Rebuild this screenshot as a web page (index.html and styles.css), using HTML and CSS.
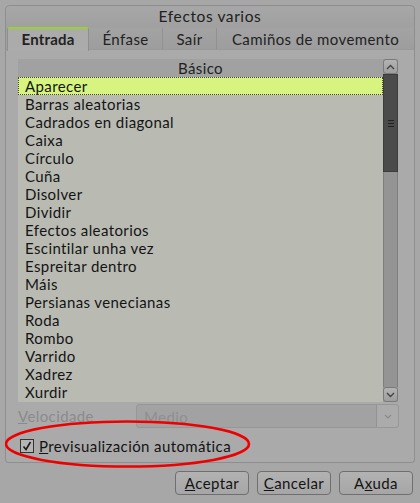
FILE: index.html
```html
<!DOCTYPE html>
<html>
<head>
<meta charset="utf-8">
<link rel="stylesheet" href="styles.css">
</head>
<body>
<div class="dialog">
  <div class="title">Efectos varios</div>
  <div class="tabs">
    <div class="tab tab-active">Entrada</div>
    <div class="tab tab-2">Énfase</div>
    <div class="tab tab-3">Saír</div>
    <div class="tab tab-4">Camiños de movemento</div>
  </div>
  <div class="panel">
    <div class="listbox">
      <div class="list">
        <div class="list-header">Básico</div>
        <div class="row row-selected">Aparecer</div>
        <div class="row">Barras aleatorias</div>
        <div class="row">Cadrados en diagonal</div>
        <div class="row">Caixa</div>
        <div class="row">Círculo</div>
        <div class="row">Cuña</div>
        <div class="row">Disolver</div>
        <div class="row">Dividir</div>
        <div class="row">Efectos aleatorios</div>
        <div class="row">Escintilar unha vez</div>
        <div class="row">Espreitar dentro</div>
        <div class="row">Máis</div>
        <div class="row">Persianas venecianas</div>
        <div class="row">Roda</div>
        <div class="row">Rombo</div>
        <div class="row">Varrido</div>
        <div class="row">Xadrez</div>
        <div class="row">Xurdir</div>
      </div>
      <div class="scrollbar">
        <div class="sb-btn"><svg width="9" height="6" viewBox="0 0 9 6"><path d="M1 5 L4.5 1.5 L8 5" fill="none" stroke="#444" stroke-width="1.4"/></svg></div>
        <div class="sb-thumb"><span class="grip"></span><span class="grip"></span><span class="grip"></span></div>
        <div class="sb-track"></div>
        <div class="sb-btn"><svg width="9" height="6" viewBox="0 0 9 6"><path d="M1 1 L4.5 4.5 L8 1" fill="none" stroke="#444" stroke-width="1.4"/></svg></div>
      </div>
    </div>
    <div class="speed">
      <span class="speed-label"><u>V</u>elocidade</span>
      <div class="combo">
        <span class="combo-text">Medio</span>
        <span class="combo-btn"><svg width="8" height="5" viewBox="0 0 8 5"><path d="M1 1 L4 4 L7 1" fill="none" stroke="#8a8a8a" stroke-width="1.2"/></svg></span>
      </div>
    </div>
    <div class="check-row">
      <span class="checkbox"><svg width="12" height="12" viewBox="0 0 12 12"><path d="M2.5 6.5 L5 9.5 L9.5 2" fill="none" stroke="#1a1a1a" stroke-width="1.6"/></svg></span>
      <span class="check-label"><u>P</u>revisualización automática</span>
      <svg class="ellipse" width="246" height="50" viewBox="0 0 246 50"><ellipse cx="122.5" cy="25" rx="121.5" ry="22.5" fill="none" stroke="#ee0000" stroke-width="2.6"/></svg>
    </div>
  </div>
  <div class="buttons">
    <div class="btn"><u>A</u>ceptar</div>
    <div class="btn"><u>C</u>ancelar</div>
    <div class="btn">A<u>x</u>uda</div>
  </div>
</div>
</body>
</html>
```
FILE: styles.css
```css
html, body {
  margin: 0;
  padding: 0;
}
body {
  width: 420px;
  height: 503px;
  background: #a7a7a7;
  font-family: Lato, "Open Sans", "DejaVu Sans", sans-serif;
  font-size: 15px;
  letter-spacing: 0.4px;
  color: #1e1e1e;
  overflow: hidden;
}
.dialog {
  padding: 5px 5px 0 5px;
  display: flex;
  flex-direction: column;
}
.title {
  height: 21px;
  border: 1px solid #8e8e8e;
  border-bottom: none;
  border-radius: 5px 5px 0 0;
  background: linear-gradient(#a7a7a7, #a0a0a0);
  text-align: center;
  line-height: 21px;
  font-size: 15.5px;
  letter-spacing: 0.6px;
  color: #202020;
}
.tabs {
  display: flex;
  height: 23px;
  border-left: 1px solid #8e8e8e;
  border-right: 1px solid #8e8e8e;
  background: #a1a1a1;
  padding-left: 1px;
}
.tab {
  height: 22px;
  line-height: 23px;
  text-align: center;
  border-right: 1px solid #919191;
  background: linear-gradient(#a3a3a3, #9d9d9d);
  color: #222;
  box-sizing: border-box;
  margin-top: 1px;
  white-space: nowrap;
}
.tab-active {
  width: 82px;
  font-weight: bold;
  letter-spacing: 0.2px;
  background: #ababab;
  border: 1px solid #8e8e8e;
  border-top: 2px solid #9ad234;
  border-bottom: none;
  border-radius: 3px 3px 0 0;
  margin-top: 0;
  height: 24px;
  line-height: 21px;
  position: relative;
  z-index: 1;
}
.tab-2 { width: 74px; }
.tab-3 { width: 54px; }
.tab-4 { flex: 1; border-right: none; }
.panel {
  margin-top: -1px;
  height: 414px;
  border: 1px solid #8e8e8e;
  border-top-color: #999;
  border-radius: 0 0 4px 4px;
  background: #aaaaaa;
  box-sizing: border-box;
  padding: 9px 16px 0 12px;
  display: flex;
  flex-direction: column;
}
.listbox {
  display: flex;
  height: 343px;
}
.list {
  flex: 1;
  background: #b9bbb3;
  overflow: hidden;
}
.list-header {
  height: 18px;
  line-height: 18px;
  text-align: center;
  background: #a1a1a1;
  color: #222;
}
.row {
  height: 18px;
  line-height: 18px;
  padding-left: 7px;
  color: #141414;
  white-space: nowrap;
}
.row-selected {
  background: #d6f47f;
  outline: 1px dotted #444;
  outline-offset: -1px;
}
.scrollbar {
  width: 15px;
  display: flex;
  flex-direction: column;
  background: #9a9a9a;
}
.sb-btn {
  height: 15px;
  border: 1px solid #7a7a7a;
  border-radius: 3px;
  background: linear-gradient(#b3b3b3, #9e9e9e);
  box-sizing: border-box;
  display: flex;
  align-items: center;
  justify-content: center;
}
.sb-thumb {
  height: 98px;
  background: #4b4b4b;
  border: 1px solid #3c3c3c;
  box-sizing: border-box;
  display: flex;
  flex-direction: column;
  justify-content: center;
  align-items: center;
  gap: 2px;
}
.grip {
  width: 6px;
  height: 1px;
  background: #222;
}
.sb-track {
  flex: 1;
  background: #949494;
  border-left: 1px solid #7e7e7e;
  border-right: 1px solid #7e7e7e;
}
.speed {
  display: flex;
  align-items: center;
  height: 26px;
  margin-top: 1px;
  margin-right: -1px;
}
.speed-label {
  width: 118px;
  color: #8b8b8b;
}
.speed-label u { text-decoration-color: #8b8b8b; }
.combo {
  flex: 1;
  height: 24px;
  display: flex;
  border: 1px solid #979797;
  border-radius: 3px;
  background: #a2a2a2;
  box-sizing: border-box;
}
.combo-text {
  flex: 1;
  padding-left: 7px;
  line-height: 24px;
  color: #8f8f8f;
}
.combo-btn {
  width: 21px;
  border-left: 1px solid #939393;
  background: #ababab;
  border-radius: 0 3px 3px 0;
  display: flex;
  align-items: center;
  justify-content: center;
}
.check-row {
  position: relative;
  display: flex;
  align-items: center;
  height: 24px;
  margin-top: 5px;
  padding-left: 2px;
}
.checkbox {
  width: 12px;
  height: 12px;
  border: 1px solid #333;
  background: #b5b5b5;
  display: flex;
}
.check-label {
  margin-left: 5px;
  color: #141414;
  white-space: nowrap;
}
.ellipse {
  position: absolute;
  left: -13px;
  top: -15px;
}
.buttons {
  display: flex;
  justify-content: flex-end;
  gap: 8px;
  margin-top: 8px;
  padding-right: 2px;
}
.btn {
  width: 74px;
  height: 24px;
  box-sizing: border-box;
  border: 1px solid #6f6f6f;
  border-radius: 4px;
  background: linear-gradient(#b2b2b2, #a6a6a6);
  text-align: center;
  line-height: 22px;
  color: #141414;
}
```
